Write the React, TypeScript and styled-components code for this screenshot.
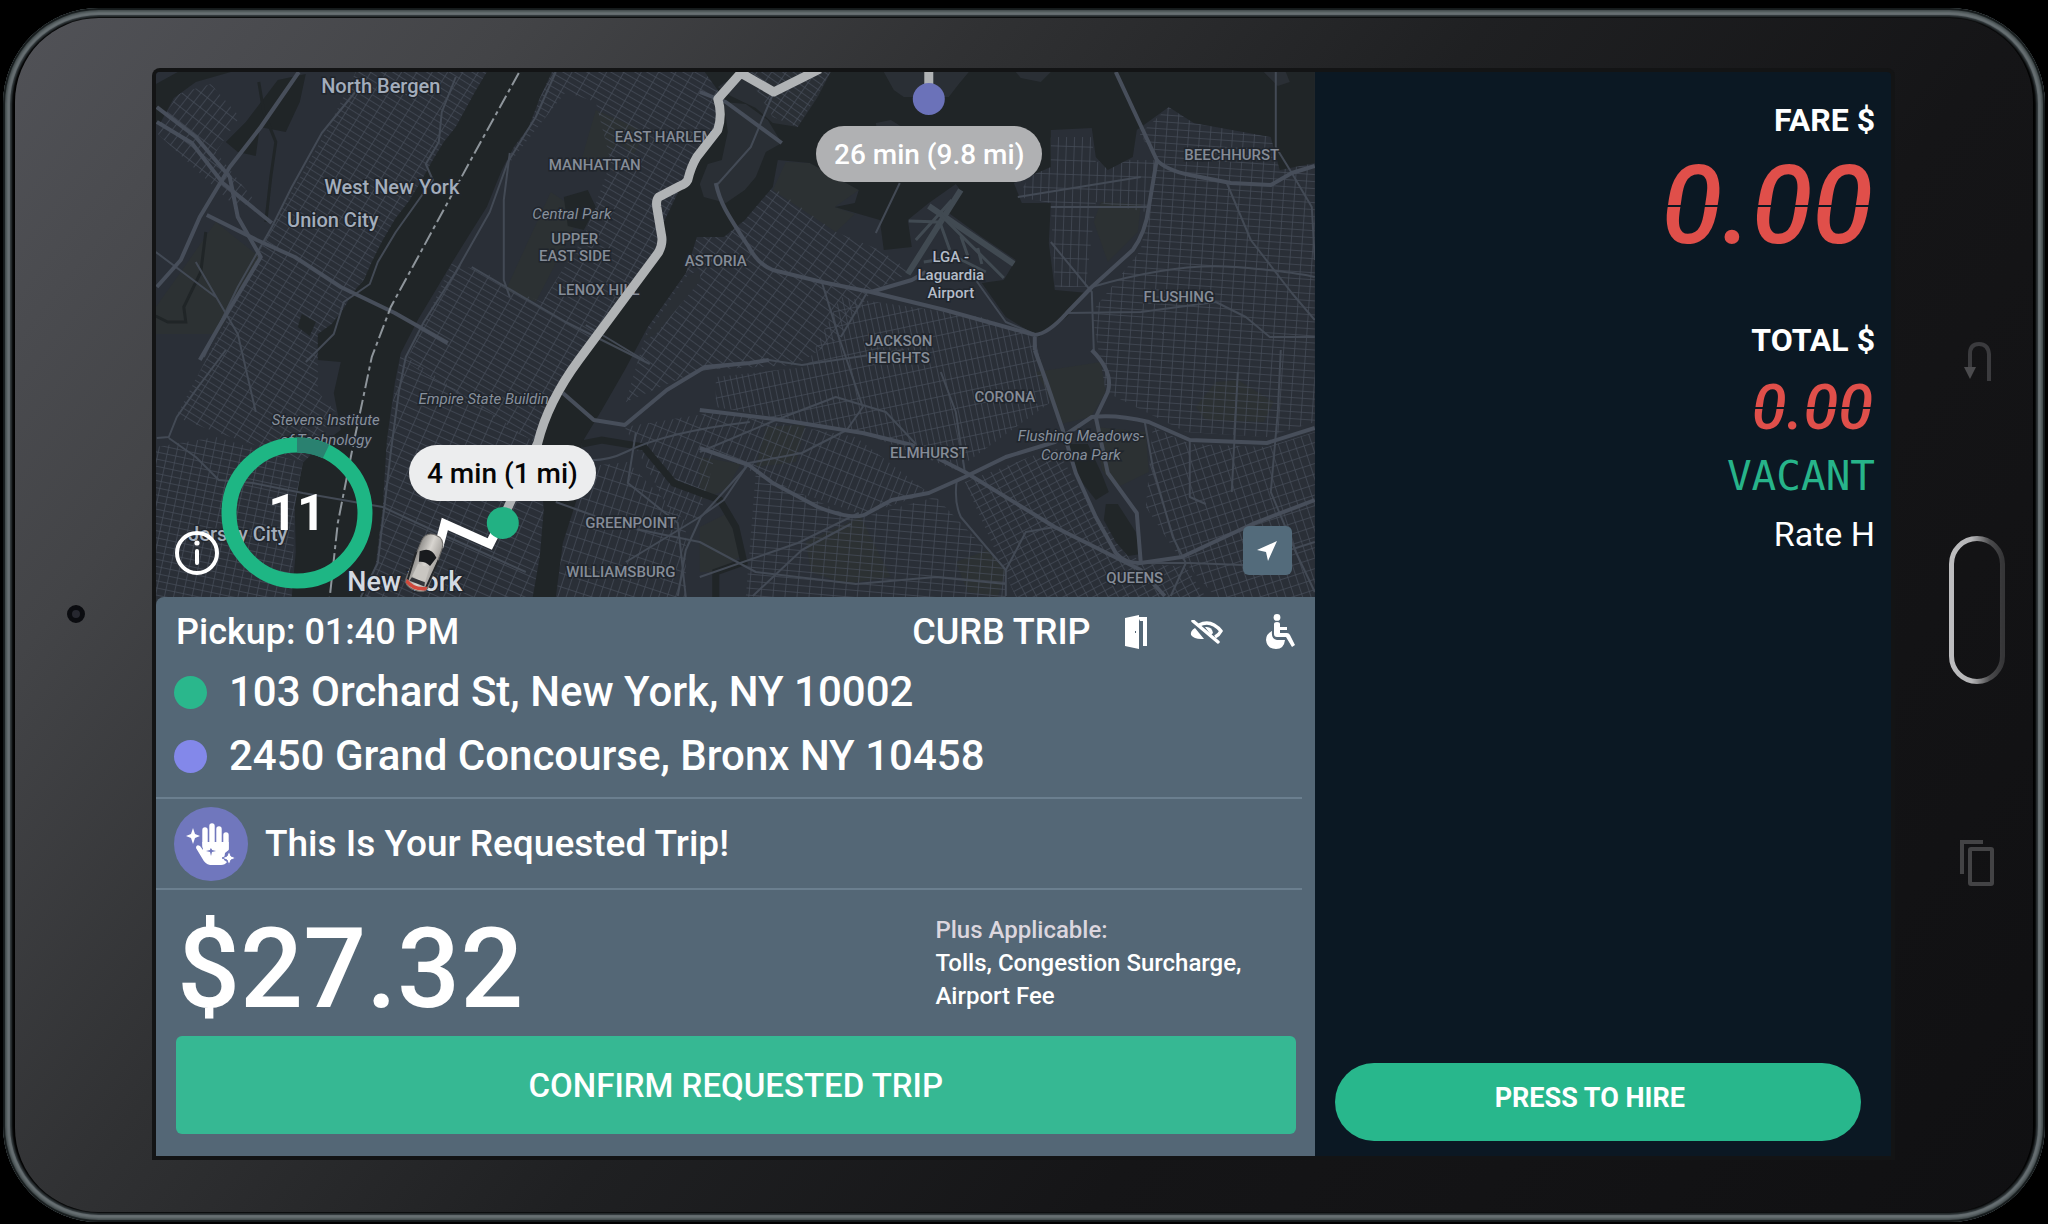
import React from 'react';
import styled, { createGlobalStyle } from 'styled-components';

const GlobalStyle = createGlobalStyle`
  *, *::before, *::after { box-sizing: border-box; }
  body { margin: 0; background: #000; font-family: Roboto, 'Liberation Sans', sans-serif; }
  button { font-family: inherit; border: 0; cursor: pointer; }
  p, h1, h2 { margin: 0; }
`;

/* ---------- Tablet ---------- */

const Page = styled.div`
  display: flex;
  min-height: 100vh;
  padding: 8px 3px 2px;
`;

const Device = styled.div`
  display: flex;
  flex: 1;
  padding: 10px 12px;
  border-radius: 96px;
  background: #000;
  box-shadow:
    inset 0 0 1px 2px #151a1b,
    inset 0 0 2px 4px #4b5456,
    inset 0 0 1px 7px #697174,
    inset 0 0 2px 9px #30373a;
`;

const Bezel = styled.div`
  display: grid;
  grid-template-columns: 141px minmax(0, 1fr) 142px;
  flex: 1;
  padding: 54px 0 56px;
  border-radius: 84px;
  background: linear-gradient(128deg, #515257 0%, #434447 17%, #303133 33%, #1f2022 50%, #151517 68%, #101012 100%);
`;

const CameraSide = styled.div`
  display: flex;
  align-items: center;
  padding-left: 52px;
`;

const Camera = styled.div`
  width: 18px;
  height: 18px;
  border: 5px solid #0b0c10;
  border-radius: 50%;
  background: #26272f;
`;

const HardwareKeys = styled.div`
  display: flex;
  flex-direction: column;
  align-items: center;
  justify-content: center;
  gap: 155px;
  padding-left: 30px;
`;

const HardwareKey = styled.button`
  display: flex;
  padding: 0;
  background: none;
`;

const Screen = styled.div`
  display: grid;
  grid-template-columns: minmax(0, 201fr) minmax(0, 100fr);
  border-radius: 4px 4px 0 0;
  box-shadow: 0 0 0 4px #131415;
  overflow: hidden;
  background: #0b1823;
`;

const TripColumn = styled.div`
  display: flex;
  flex-direction: column;
  background: #2a2f36;
`;

/* ---------- Map ---------- */

const MapArea = styled.div`
  position: relative;
  flex: 1;
  min-height: 420px;
`;

const MapSvg = styled.svg`
  position: absolute;
  width: 100%;
  height: 100%;
`;

const Label = styled.text<{ $kind: 'town' | 'city' | 'area' | 'place' | 'airport' }>`
  font-family: Roboto, sans-serif;
  text-anchor: middle;
  paint-order: stroke;
  stroke: #20252c;
  stroke-width: 3px;
  font-style: ${(p) => (p.$kind === 'place' ? 'italic' : 'normal')};
  font-weight: ${(p) => (p.$kind === 'place' ? 400 : 500)};
  font-size: ${(p) => ({ town: 20, city: 27, area: 15, place: 15, airport: 15 })[p.$kind]}px;
  fill: ${(p) => ({ town: '#a3adbb', city: '#d3d9e1', area: '#858c97', place: '#87909c', airport: '#b4bcc8' })[p.$kind]};
`;

const TimePill = styled.div<{ $muted?: boolean }>`
  position: absolute;
  left: ${(p) => (p.$muted ? 660 : 253)}px;
  top: ${(p) => (p.$muted ? 54 : 373)}px;
  display: flex;
  align-items: center;
  height: 56px;
  padding: 0 18px;
  border-radius: 28px;
  background: ${(p) => (p.$muted ? '#b0b1b3' : '#ecedee')};
  color: ${(p) => (p.$muted ? '#fff' : '#060606')};
  font-size: 28px;
  font-weight: 500;
  white-space: nowrap;
`;

const Countdown = styled.div`
  position: absolute;
  left: 65px;
  bottom: 8px;
  display: grid;
  place-items: center;
  width: 152px;
  height: 152px;
  color: #fff;
  font-size: 50px;
  font-weight: 700;

  svg { position: absolute; inset: 0; }
  span { position: relative; }
`;

const InfoButton = styled.button`
  position: absolute;
  left: 19px;
  bottom: 22px;
  width: 44px;
  height: 44px;
  padding: 0;
  border-radius: 50%;
  background: none;
`;

const LocateButton = styled.button`
  position: absolute;
  right: 23px;
  bottom: 22px;
  display: grid;
  place-items: center;
  width: 49px;
  height: 49px;
  padding: 0;
  border-radius: 6px;
  background: #536b7b;
`;

/* ---------- Trip details ---------- */

const TripPanel = styled.section`
  padding: 13px 0 22px;
  border-top-left-radius: 8px;
  background: #546776;
  color: #fff;
`;

const TripHeader = styled.header`
  display: flex;
  align-items: center;
  justify-content: space-between;
  padding: 0 20px;
  font-size: 36px;
  font-weight: 500;
  line-height: 44px;
`;

const TripTags = styled.div`
  display: flex;
  align-items: center;
  gap: 33px;
`;

const TagIcons = styled.div`
  display: flex;
  align-items: center;
  gap: 42px;
`;

const Stops = styled.div`
  padding: 6px 18px 9px;
`;

const Stop = styled.p`
  display: flex;
  align-items: center;
  gap: 22px;
  font-size: 42px;
  font-weight: 500;
  line-height: 64px;
`;

const StopDot = styled.span<{ $color: string }>`
  width: 33px;
  height: 33px;
  border-radius: 50%;
  background: ${(p) => p.$color};
`;

const Divider = styled.hr`
  height: 2px;
  margin: 0 13px 0 0;
  border: 0;
  background: #6b7f8f;
`;

const Notice = styled.div`
  display: flex;
  align-items: center;
  gap: 17px;
  height: 89px;
  padding: 0 18px;
  font-size: 37px;
  font-weight: 500;
`;

const NoticeBadge = styled.span`
  display: grid;
  place-items: center;
  width: 74px;
  height: 74px;
  border-radius: 50%;
  background: #7077bd;
`;

const PriceRow = styled.div`
  display: grid;
  grid-template-columns: minmax(0, 2fr) minmax(0, 1fr);
  align-items: center;
  height: 146px;
  padding: 0 0 0 21px;
`;

const Price = styled.strong`
  padding-top: 12px;
  font-size: 111px;
  font-weight: 500;
  line-height: 112px;
`;

const Surcharges = styled.p`
  padding-right: 40px;
  font-size: 24px;
  font-weight: 500;
  line-height: 33px;
`;

const Muted = styled.span`
  display: block;
  color: #dcd6de;
`;

const ConfirmButton = styled.button`
  display: block;
  width: calc(100% - 39px);
  height: 98px;
  margin: 0 19px 0 20px;
  border-radius: 6px;
  background: #36b893;
  color: #fff;
  font-size: 33px;
  font-weight: 500;
`;

/* ---------- Meter ---------- */

const Meter = styled.aside`
  display: flex;
  flex-direction: column;
  align-items: flex-end;
  padding: 28px 16px 15px 20px;
  color: #fff;
`;

const MeterLabel = styled.h2`
  font-size: 32px;
  font-weight: 700;
  line-height: 40px;
`;

const Digits = styled.output<{ $small?: boolean }>`
  font-size: ${(p) => (p.$small ? 63 : 110)}px;
  font-style: italic;
  font-weight: 500;
  line-height: ${(p) => (p.$small ? 76 : 132)}px;
  margin: ${(p) => (p.$small ? '10px 0 0' : '0 0 48px')};
  padding-right: 2px;
  color: transparent;
  background: linear-gradient(#e04f4a 49%, transparent 49%, transparent 51%, #e04f4a 51%);
  background-clip: text;
  -webkit-background-clip: text;
`;

const Status = styled.output`
  margin: 8px 0 16px;
  color: #27b48a;
  font-family: 'DejaVu Sans Mono', monospace;
  font-size: 41px;
  line-height: 44px;
`;

const Rate = styled.p`
  font-size: 34px;
  line-height: 40px;
`;

const HireButton = styled.button`
  width: calc(100% - 14px);
  height: 78px;
  margin: auto 14px 0 0;
  padding: 0 16px 8px 0;
  border-radius: 39px;
  background: #28b78c;
  color: #fff;
  font-size: 27px;
  font-weight: 700;
`;

/* ---------- Map data ---------- */

const WATER = '#202527';

const rivers = [
  'M331 0 L318 22 300 55 288 70 277 88 266 108 254 128 240 146 227 168 216 190 208 208 196 222 189 235 176 252 162 262 162 288 185 290 178 321 185 358 166 372 147 391 143 412 139 435 140 480 136 525 L208 525 220 491 227 435 231 368 239 311 245 281 262 248 280 218 296 191 314 162 331 135 346 98 358 75 373 55 384 26 396 0Z',
  'M549 0 L564 21 560 68 530 101 522 121 508 150 507 175 453 248 419 288 396 328 380 371 386 410 388 438 384 485 377 525 H400 L407 471 423 421 426 371 446 338 469 298 492 255 530 201 541 165 568 165 589 148 617 115 622 88 654 91 703 118 699 131 679 135 724 148 728 178 756 175 752 148 773 131 800 112 806 120 793 141 826 165 860 188 848 208 826 211 850 245 883 265 911 245 932 221 899 218 893 171 895 131 866 131 858 111 895 95 895 58 936 56 940 85 952 98 977 85 981 58 1013 35 1038 51 1115 65 1124 98 1159 91 V0Z',
  'M0 12 L22 0 H75 L40 10 18 26 5 50 0 50Z',
  'M122 8 L150 2 144 30 130 60 104 55 100 84 82 80 70 70 90 50Z',
];

const islands = [
  'M585 0 H675 L662 25 642 55 617 51 600 36 575 24 562 15Z',
  'M568 30 L590 32 612 48 626 71 610 80 600 105 589 118 570 131 548 125 544 112 552 92 566 88 572 60Z',
  'M728 0 L738 18 748 25 793 25 803 12 813 0Z',
  'M720 51 L735 48 748 56 745 66 722 62Z',
  'M530 205 L543 198 545 208 500 262 488 268Z',
  'M860 0 H895 L885 10 865 6Z',
  'M1108 0 H1130 L1134 10 1122 14Z',
];

const parks = [
  'M440 38 L490 60 478 82 462 70 442 100 425 90Z',
  'M60 150 L105 186 82 225 62 262 0 262 V235 L25 200Z',
  'M395 120 L425 140 412 168 380 230 350 218 372 170Z',
  'M654 91 L703 118 679 135 699 142 680 160 617 118 630 90Z',
  'M880 300 L945 290 950 320 935 345 905 352 890 318Z',
  'M940 355 L990 360 993 400 960 416 946 398Z',
  'M1040 335 L1060 310 1082 308 1118 330 1108 350 1050 348Z',
  'M544 385 L585 392 570 418 544 428Z',
  'M544 455 L570 442 590 480 562 500 544 500Z',
  'M610 355 L650 352 640 390 600 395Z',
  'M800 490 L832 478 850 500 842 525 812 520Z',
  'M650 470 L705 445 735 505 690 512 655 500Z',
  'M945 130 L985 132 982 160 952 190 938 150Z',
];

const ponds = [
  'M408 125 L432 118 440 135 428 158 412 154Z',
  'M146 242 L160 250 154 264 142 255Z',
  'M912 372 L932 372 946 402 953 420 940 428 922 405Z',
  'M950 432 L962 432 980 460 985 482 972 484 960 470 948 448Z',
];

const streetAreas: { id: string; angle: number; gap: number; cross: number; shape: string }[] = [
  { id: 'bergen', angle: 32, gap: 13, cross: 6, shape: 'M170 60 L200 0 H331 L300 55 254 128 208 208 162 288 V320 L180 340 150 390 60 360 20 345 70 250 116 155Z' },
  { id: 'hoboken', angle: 12, gap: 9, cross: 7, shape: 'M0 375 L60 365 150 392 139 435 136 525 H0Z' },
  { id: 'meadows', angle: 38, gap: 8, cross: 12, shape: 'M5 50 L22 22 55 12 84 45 60 80 100 130 80 135 0 60Z' },
  { id: 'manhattan', angle: 30, gap: 15, cross: 6, shape: 'M396 0 H549 L564 21 560 68 530 101 507 175 453 248 419 288 396 328 380 371 250 290 296 191 330 200 350 215 386 230 428 165 455 90 440 30 410 20 378 60 348 98 358 75Z' },
  { id: 'downtown', angle: 24, gap: 14, cross: 7, shape: 'M245 281 L380 371 388 438 384 485 377 525 H208 L220 491 231 368Z' },
  { id: 'bronx', angle: 35, gap: 12, cross: 6, shape: 'M590 0 H675 L642 55 617 45Z' },
  { id: 'astoria', angle: 36, gap: 14, cross: 7, shape: 'M541 165 L568 165 617 115 680 160 724 178 756 200 715 220 685 265 640 293 544 298 470 330 492 255 530 201Z' },
  { id: 'heights', angle: -12, gap: 6, cross: 15, shape: 'M685 225 L826 245 879 265 895 330 800 398 707 361 560 335 560 305 650 295Z' },
  { id: 'woodside', angle: 22, gap: 7, cross: 14, shape: 'M469 355 L560 340 700 365 773 421 707 443 617 411 560 380 544 445 520 450Z' },
  { id: 'brooklyn', angle: 18, gap: 8, cross: 13, shape: 'M426 395 L472 390 530 450 530 525 H400 L407 471Z' },
  { id: 'maspeth', angle: 5, gap: 12, cross: 7, shape: 'M600 400 L700 447 780 425 850 498 850 525 H590Z' },
  { id: 'forest', angle: -28, gap: 9, cross: 7, shape: 'M809 410 L900 375 940 445 985 491 1030 495 1050 525 H860Z' },
  { id: 'college', angle: 2, gap: 8, cross: 14, shape: 'M895 65 H935 L940 90 977 88 1001 88 990 140 940 130 930 215 899 215 895 131 862 125Z' },
  { id: 'flushing', angle: 4, gap: 11, cross: 7, shape: 'M1001 88 L984 62 1013 35 1038 51 1115 65 1159 95 V350 L1111 365 1030 360 950 320 936 240 985 178Z' },
  { id: 'hills', angle: -18, gap: 8, cross: 10, shape: 'M997 355 L1034 372 1111 375 1159 360 V525 H1060 L1020 480 990 435Z' },
];

const mainRoads = [
  'M143 0 L105 55 74 95 44 145 25 188 1 215',
  'M1 35 L40 65 74 105 82 145 105 185 63 255 44 288',
  'M1 50 L36 71 67 111 116 151',
  'M51 143 L101 168 139 185 185 215 239 241 292 271',
  'M560 111 C564 130 570 140 593 175 Q602 192 617 198 L666 210 715 220 756 208 770 200',
  'M715 220 L789 238 879 263 Q892 262 911 241 L936 215 977 178 Q990 160 993 135 L1001 88 960 0',
  'M1001 88 Q1010 98 1034 103 L1075 111 1115 113 1136 101 1159 94',
  'M544 338 L626 348 707 361 756 373 809 400 899 455 985 498 1009 524',
  'M544 376 L593 393 617 411 662 435 Q700 450 712 441 L736 428 773 421 809 405 850 385 899 370 936 345 Q960 342 993 350 L1034 368 1111 371 1159 356',
  'M879 278 L891 311 907 358 920 401 940 445 960 481 Q970 492 985 491 L1026 485 1099 451 1159 428',
  'M936 278 Q958 300 952 320 L940 345 952 401 981 441 985 491',
  'M407 321 L438 348 469 353 511 318 549 295 594 291 613 288',
  'M879 265 L879 278 M626 71 L570 30 544 20',
];

const minorRoads = [
  'M201 18 L166 61 136 115 116 155 82 215 48 285',
  'M70 278 L40 318 21 345 13 365 1 366',
  'M13 366 L40 385 63 408 97 411 147 421 227 435 270 455 370 500',
  'M300 5 L286 40 283 70 270 92 277 108 240 160 222 190 214 212 188 230 178 262 150 290',
  'M400 0 L380 45 352 90 334 140 300 200 268 250 250 285 243 320 235 380 228 440 222 491 205 525',
  'M354 81 L348 128 348 208 354 225 M316 195 L410 250 494 292',
  'M430 253 L488 288 M618 20 L595 75 562 112',
  'M1120 0 L1120 75 1136 101 1156 135 1159 188',
  'M1071 111 L1095 168 1136 221 1159 248',
  'M666 210 L683 265 691 288 707 335 691 358 646 381 593 391 568 428 544 445 470 490',
  'M711 221 L685 265 M744 111 L720 161 M820 208 L850 250 879 262 M895 170 L936 220 938 278',
  'M544 505 L642 471 703 441 M597 524 L646 478 695 452',
  'M801 408 Q798 430 805 445 L850 498 850 524',
  'M989 350 L997 395 1017 465 1030 491 1015 524',
  'M544 298 L613 288 646 293 748 278 M985 491 L1034 491 1087 493 1159 470',
  'M480 361 L472 411 522 451 530 525 M594 391 L545 445 530 478 522 524',
  'M911 241 L985 240 1060 230 1090 245 1114 265 1159 265',
  'M936 215 Q1020 190 1080 195 T1159 205 M862 125 L985 105 M895 135 H993',
  'M1125 278 L1122 340 1115 420 1140 480 1159 520 M1082 300 L1076 420 M1034 368 L1034 425 1050 432',
  'M0 180 L60 225 M40 190 L82 262 100 340 M380 371 Q430 400 470 380 T594 350',
  'M400 430 L470 455 544 470 600 500 700 512 780 505 850 512 M899 455 L870 460 850 498',
  'M544 380 L620 348 680 325 730 340 760 372 M809 400 L800 340 785 300',
];

const newtownCreek = 'M426 372 L446 368 488 375 518 411 564 428 580 455 588 490 560 500 560 525';

function CityMap() {
  return (
    <MapSvg viewBox="0 0 1159 525" preserveAspectRatio="xMidYMid slice" role="img" aria-label="Route map of New York">
      <defs>
        {streetAreas.map((a) => (
          <pattern key={a.id} id={a.id} width={a.gap} height={a.cross} patternUnits="userSpaceOnUse" patternTransform={`rotate(${a.angle})`}>
            <path d={`M0 0 V${a.cross} M0 0 H${a.gap}`} stroke="#454c57" strokeWidth="1.5" />
          </pattern>
        ))}
        <linearGradient id="carBody" x1="0" x2="1">
          <stop offset="0" stopColor="#8d8b88" />
          <stop offset="0.5" stopColor="#d8d5d0" />
          <stop offset="1" stopColor="#a19e9a" />
        </linearGradient>
      </defs>
      <rect width="1159" height="525" fill="#2a2f37" />
      {parks.map((d) => <path key={d} d={d} fill="#2c3133" />)}
      {streetAreas.map((a) => <path key={a.id} d={a.shape} fill={`url(#${a.id})`} />)}
      {rivers.map((d) => <path key={d} d={d} fill={WATER} />)}
      {islands.map((d) => <path key={d} d={d} fill="#2a2f35" />)}
      <path d={streetAreas[5].shape} fill="url(#bronx)" />
      {ponds.map((d) => <path key={d} d={d} fill="#212628" />)}
      <path d={newtownCreek} fill="none" stroke={WATER} strokeWidth="7" />
      <path d="M103 10 L108 40 120 70 115 105 110 150 M50 160 L45 200 28 235 30 250 12 250 0 244" fill="none" stroke={WATER} strokeWidth="3" />
      <g fill="none" stroke="#434a55" strokeLinejoin="round">
        {minorRoads.map((d) => <path key={d} d={d} strokeWidth="2" />)}
      </g>
      <g fill="none" stroke="#474e5a" strokeLinejoin="round">
        {mainRoads.map((d) => <path key={d} d={d} strokeWidth="4" />)}
      </g>
      <g stroke="#414a52" fill="none">
        <path d="M805 118 L752 202 M773 134 L858 192" strokeWidth="6" />
        <path d="M796 128 L760 168 M753 149 L784 150 794 178 M784 142 L842 200 848 206 M805 164 L812 184 M822 176 L826 192 M768 190 L800 185 830 200" strokeWidth="3" />
      </g>
      <path d="M363 1 L315 88 235 235 216 285 197 375 182 451 174 525" fill="none" stroke="#8e959b" strokeWidth="2" strokeDasharray="14 4 4 4" />

      <Label $kind="town" x="225" y="21">North Bergen</Label>
      <Label $kind="town" x="236" y="122">West New York</Label>
      <Label $kind="town" x="177" y="155">Union City</Label>
      <Label $kind="area" x="509" y="70">EAST HARLEM</Label>
      <Label $kind="area" x="439" y="98">MANHATTAN</Label>
      <Label $kind="place" x="416" y="147">Central Park</Label>
      <Label $kind="area" x="419" y="172">UPPER</Label>
      <Label $kind="area" x="419" y="189">EAST SIDE</Label>
      <Label $kind="area" x="443" y="223">LENOX HILL</Label>
      <Label $kind="area" x="560" y="194">ASTORIA</Label>
      <Label $kind="area" x="1076" y="88">BEECHHURST</Label>
      <Label $kind="airport" x="795" y="190">LGA -</Label>
      <Label $kind="airport" x="795" y="208">Laguardia</Label>
      <Label $kind="airport" x="795" y="226">Airport</Label>
      <Label $kind="area" x="1023" y="230">FLUSHING</Label>
      <Label $kind="area" x="743" y="274">JACKSON</Label>
      <Label $kind="area" x="743" y="291">HEIGHTS</Label>
      <Label $kind="area" x="849" y="330">CORONA</Label>
      <Label $kind="area" x="773" y="386">ELMHURST</Label>
      <Label $kind="place" x="925" y="369">Flushing Meadows-</Label>
      <Label $kind="place" x="925" y="388">Corona Park</Label>
      <Label $kind="place" x="332" y="332">Empire State Building</Label>
      <Label $kind="place" x="170" y="353">Stevens Institute</Label>
      <Label $kind="place" x="170" y="373">of Technology</Label>
      <Label $kind="area" x="475" y="456">GREENPOINT</Label>
      <Label $kind="area" x="465" y="505">WILLIAMSBURG</Label>
      <Label $kind="area" x="979" y="511">QUEENS</Label>
      <Label $kind="town" x="82" y="469">Jersey City</Label>
      <Label $kind="city" x="249" y="519">New York</Label>

      <g fill="none" strokeLinejoin="round" strokeWidth="9">
        <path d="M664 -3 L618 20 585 1 562 27 Q567 42 562 58 L541 85 Q535 95 532 108 Q530 112 524 114 L503 125 Q500 128 501 135 L506 165 Q507 172 503 180 L423 288 Q392 330 382 371 L350 440" stroke="#b0b3b5" />
        <path d="M773 -4 V20" stroke="#b0b3b5" />
        <path d="M283 475 L289 452 334 472 342 456" stroke="#fff" strokeLinejoin="miter" />
      </g>
      <circle cx="773" cy="27" r="16" fill="#6b72b9" />
      <circle cx="347" cy="451" r="16" fill="#22b183" />
      <g transform="translate(269 491) rotate(21)">
        <path d="M-11 -20 Q-10 -30 0 -30 T11 -20 L12 20 Q12 29 0 29 T-12 20Z" fill="url(#carBody)" stroke="#6e6c69" />
        <path d="M-11 -8 L-9 22 -11 22 -13 -6Z M11 -8 L9 22 11 22 13 -6Z" fill="#242629" />
        <path d="M-9 -9 Q0 -18 9 -9 L6 1 Q0 -2 -6 1Z" fill="#191b1e" />
        <path d="M-6 3 H6 L7 17 H-7Z" fill="#c9c6c1" />
        <path d="M-7 18 H7 L8 22 H-8Z" fill="#34363a" />
        <path d="M-11 21 Q0 28 11 21 V25 Q0 31 -11 25Z" fill="#d0493c" />
      </g>
    </MapSvg>
  );
}

/* ---------- Icons ---------- */

const DoorIcon = () => (
  <svg width="24" height="34" viewBox="0 0 24 34" fill="#fff" aria-hidden="true">
    <path fillRule="evenodd" d="M1 3 L15 0 V34 L1 31Z M11 16 V18 H12 V16Z" />
    <path d="M14 2 H23 V31 H19 V6 H16Z" />
  </svg>
);

const EyeOffIcon = () => (
  <svg width="33" height="24" viewBox="0 0 33 24" fill="none" aria-hidden="true">
    <path d="M9 5 Q17 1 24 5 Q29 8 31 11 Q29 15 25 17" stroke="#fff" strokeWidth="3.4" />
    <path d="M15 7 Q22 6 23 13 L21 15Z" fill="#fff" />
    <path d="M5 8 Q0 11 1 15 Q4 19 11 19 L14 19Z" fill="#fff" />
    <path d="M3 1 L28 22" stroke="#fff" strokeWidth="3.4" strokeLinecap="round" />
  </svg>
);

const WheelchairIcon = () => (
  <svg width="30" height="36" viewBox="0 0 30 36" aria-hidden="true">
    <circle cx="12" cy="3.4" r="3.4" fill="#fff" />
    <path d="M9 10 Q9 8 12 8 Q15 8 15 10 V13 H22 V16 H15 V19 H22 Q24 19 25 21 L30 31 L27 33 L21 23 H12 Q9 23 9 20Z" fill="#fff" />
    <path d="M7 17 Q1 20 1 26 Q2 35 11 35 Q19 35 20 26 H12 Q6 25 7 17Z" fill="#fff" />
  </svg>
);

const HandIcon = () => (
  <svg width="50" height="44" viewBox="0 0 50 44" fill="#fff" aria-hidden="true">
    <g stroke="#fff" strokeWidth="5.4" strokeLinecap="round">
      <path d="M19 24 V8 M26 24 V4 M33 24 V7 M40 26 V13" />
    </g>
    <path fillRule="evenodd" d="M16.300 20 H42.700 V28 L39 31 L38 38 L41 40 Q39 43 35 43 H24 Q19 42 16 36 L10 26 Q10 22 14 24 L17 28Z M25 24 L24 28 L20 29 L24 30 L25 34 L26 30 L30 29 L26 28Z" />
    <path d="M7 6 L9 12 L14 14 L9 16 L7 22 L5 16 L0 14 L5 12Z" />
    <path d="M43 29 L45 34 L50 36 L45 38 L43 43 L41 38 L36 36 L41 34Z" stroke="#7077bd" strokeWidth="1" />
  </svg>
);

const BackIcon = () => (
  <svg width="27" height="39" viewBox="0 0 27 39" fill="none" aria-hidden="true">
    <path d="M6 27 V12 Q6 2 15 2 T25 12 V39" stroke="#3b3b3e" strokeWidth="4" />
    <path d="M0 25 H12 L6 37Z" fill="#4b4b4e" />
  </svg>
);

const HomeIcon = () => (
  <svg width="56" height="148" viewBox="0 0 56 148" fill="none" aria-hidden="true">
    <defs>
      <linearGradient id="homeRim" x1="0" x2="1">
        <stop offset="0" stopColor="#bdbdbf" />
        <stop offset="0.4" stopColor="#b4b4b6" />
        <stop offset="0.75" stopColor="#4b4b4d" />
        <stop offset="1" stopColor="#363638" />
      </linearGradient>
    </defs>
    <rect x="2.500" y="2.500" width="51" height="143" rx="25.500" stroke="url(#homeRim)" strokeWidth="5" />
  </svg>
);

const RecentsIcon = () => (
  <svg width="34" height="47" viewBox="0 0 34 47" fill="none" stroke="#434345" strokeWidth="4" aria-hidden="true">
    <path d="M2 35 V3 H23" />
    <rect x="10" y="10" width="22" height="35" rx="1" />
  </svg>
);

export default function App() {
  return (
    <>
      <GlobalStyle />
      <Page>
        <Device>
          <Bezel>
            <CameraSide>
              <Camera />
            </CameraSide>
            <Screen>
              <TripColumn>
                <MapArea>
                  <CityMap />
                  <TimePill>4 min (1 mi)</TimePill>
                  <TimePill $muted>26 min (9.8 mi)</TimePill>
                  <Countdown>
                    <svg viewBox="0 0 152 152" fill="none" strokeWidth="15" aria-hidden="true">
                      <circle cx="76" cy="76" r="68" stroke="#1eb684" />
                      <path d="M76 8 A68 68 0 0 1 105 14.500" stroke="#2a8170" />
                    </svg>
                    <span>11</span>
                  </Countdown>
                  <InfoButton aria-label="Trip information">
                    <svg width="44" height="44" viewBox="0 0 44 44" fill="none" stroke="#fff" aria-hidden="true">
                      <circle cx="22" cy="22" r="20" strokeWidth="4" />
                      <path d="M22 20 V32" strokeWidth="4" strokeLinecap="round" />
                      <circle cx="22" cy="12" r="2.600" fill="#fff" stroke="none" />
                    </svg>
                  </InfoButton>
                  <LocateButton aria-label="Center map">
                    <svg width="20" height="20" viewBox="0 0 20 20" fill="#fff" aria-hidden="true">
                      <path d="M20 0 L11 20 L9 11 L0 9Z" />
                    </svg>
                  </LocateButton>
                </MapArea>
                <TripPanel>
                  <TripHeader>
                    <p>Pickup: 01:40 PM</p>
                    <TripTags>
                      <span>CURB TRIP</span>
                      <TagIcons>
                        <DoorIcon />
                        <EyeOffIcon />
                        <WheelchairIcon />
                      </TagIcons>
                    </TripTags>
                  </TripHeader>
                  <Stops>
                    <Stop><StopDot $color="#2ab78c" />103 Orchard St, New York, NY 10002</Stop>
                    <Stop><StopDot $color="#8388ea" />2450 Grand Concourse, Bronx NY 10458</Stop>
                  </Stops>
                  <Divider />
                  <Notice>
                    <NoticeBadge><HandIcon /></NoticeBadge>
                    This Is Your Requested Trip!
                  </Notice>
                  <Divider />
                  <PriceRow>
                    <Price>$27.32</Price>
                    <Surcharges>
                      <Muted>Plus Applicable:</Muted>
                      Tolls, Congestion Surcharge, Airport Fee
                    </Surcharges>
                  </PriceRow>
                  <ConfirmButton>CONFIRM REQUESTED TRIP</ConfirmButton>
                </TripPanel>
              </TripColumn>
              <Meter>
                <MeterLabel>FARE $</MeterLabel>
                <Digits>0.00</Digits>
                <MeterLabel>TOTAL $</MeterLabel>
                <Digits $small>0.00</Digits>
                <Status>VACANT</Status>
                <Rate>Rate H</Rate>
                <HireButton>PRESS TO HIRE</HireButton>
              </Meter>
            </Screen>
            <HardwareKeys>
              <HardwareKey aria-label="Back"><BackIcon /></HardwareKey>
              <HardwareKey aria-label="Home"><HomeIcon /></HardwareKey>
              <HardwareKey aria-label="Recent apps"><RecentsIcon /></HardwareKey>
            </HardwareKeys>
          </Bezel>
        </Device>
      </Page>
    </>
  );
}
